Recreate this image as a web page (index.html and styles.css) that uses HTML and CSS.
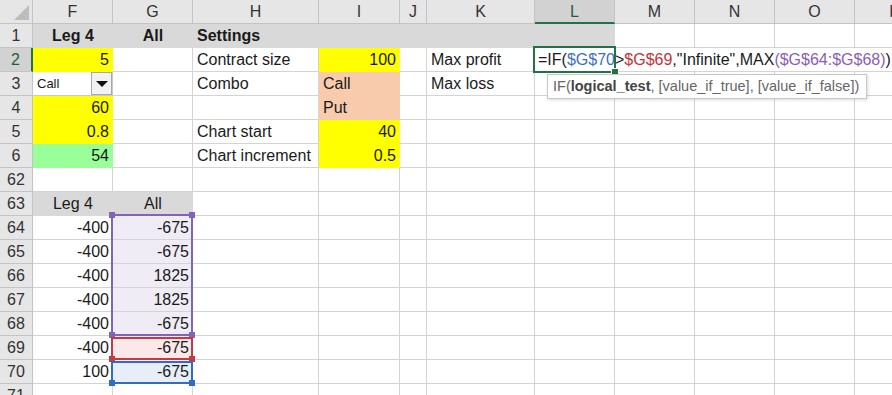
FILE: index.html
```html
<!DOCTYPE html>
<html lang="en">
<head>
    <meta charset="UTF-8">
    <meta name="viewport" content="width=device-width, initial-scale=1.0">
    <title>Options payoff - Leg 4</title>
    <link rel="stylesheet" href="styles.css">
</head>
<body>
    <div class="wrap">
        <div class="sheet">
            <!-- column headers -->
            <div class="hd corner"><span class="tri"></span></div>
            <div class="hd">F</div>
            <div class="hd">G</div>
            <div class="hd">H</div>
            <div class="hd">I</div>
            <div class="hd">J</div>
            <div class="hd">K</div>
            <div class="hd on">L</div>
            <div class="hd">M</div>
            <div class="hd">N</div>
            <div class="hd">O</div>
            <div class="hd">P</div>

            <!-- row 1 -->
            <div class="rh">1</div>
            <div class="c gray ctr b">Leg 4</div>
            <div class="c gray ctr b">All</div>
            <div class="c gray b">Settings</div>
            <div class="c gray"></div>
            <div class="c gray"></div>
            <div class="c gray"></div>
            <div class="c gray"></div>
            <div class="c"></div><div class="c"></div><div class="c"></div><div class="c"></div>

            <!-- row 2 -->
            <div class="rh on">2</div>
            <div class="c yel num">5</div>
            <div class="c"></div>
            <div class="c">Contract size</div>
            <div class="c yel num">100</div>
            <div class="c"></div>
            <div class="c">Max profit</div>
            <div class="c"></div>
            <div class="c"></div><div class="c"></div><div class="c"></div><div class="c"></div>

            <!-- row 3 -->
            <div class="rh">3</div>
            <div class="c dd"><span class="dd-val">Call</span><span class="dd-btn"><span class="arrow"></span></span></div>
            <div class="c"></div>
            <div class="c">Combo</div>
            <div class="c peach">Call</div>
            <div class="c"></div>
            <div class="c">Max loss</div>
            <div class="c"></div>
            <div class="c"></div><div class="c"></div><div class="c"></div><div class="c"></div>

            <!-- row 4 -->
            <div class="rh">4</div>
            <div class="c yel num">60</div>
            <div class="c"></div>
            <div class="c"></div>
            <div class="c peach">Put</div>
            <div class="c"></div>
            <div class="c"></div>
            <div class="c"></div>
            <div class="c"></div><div class="c"></div><div class="c"></div><div class="c"></div>

            <!-- row 5 -->
            <div class="rh">5</div>
            <div class="c yel num">0.8</div>
            <div class="c"></div>
            <div class="c">Chart start</div>
            <div class="c yel num">40</div>
            <div class="c"></div>
            <div class="c"></div>
            <div class="c"></div>
            <div class="c"></div><div class="c"></div><div class="c"></div><div class="c"></div>

            <!-- row 6 -->
            <div class="rh">6</div>
            <div class="c grn num">54</div>
            <div class="c"></div>
            <div class="c">Chart increment</div>
            <div class="c yel num">0.5</div>
            <div class="c"></div>
            <div class="c"></div>
            <div class="c"></div>
            <div class="c"></div><div class="c"></div><div class="c"></div><div class="c"></div>

            <!-- row 62 -->
            <div class="rh">62</div>
            <div class="c"></div><div class="c"></div><div class="c"></div><div class="c"></div>
            <div class="c"></div><div class="c"></div><div class="c"></div>
            <div class="c"></div><div class="c"></div><div class="c"></div><div class="c"></div>

            <!-- row 63 -->
            <div class="rh">63</div>
            <div class="c gray ctr">Leg 4</div>
            <div class="c gray ctr">All</div>
            <div class="c"></div><div class="c"></div><div class="c"></div><div class="c"></div>
            <div class="c"></div><div class="c"></div><div class="c"></div><div class="c"></div><div class="c"></div>

            <!-- rows 64 - 70 -->
            <div class="rh">64</div>
            <div class="c num">-400</div>
            <div class="c num hl-purple">-675</div>
            <div class="c"></div><div class="c"></div><div class="c"></div><div class="c"></div>
            <div class="c"></div><div class="c"></div><div class="c"></div><div class="c"></div><div class="c"></div>

            <div class="rh">65</div>
            <div class="c num">-400</div>
            <div class="c num hl-purple">-675</div>
            <div class="c"></div><div class="c"></div><div class="c"></div><div class="c"></div>
            <div class="c"></div><div class="c"></div><div class="c"></div><div class="c"></div><div class="c"></div>

            <div class="rh">66</div>
            <div class="c num">-400</div>
            <div class="c num hl-purple">1825</div>
            <div class="c"></div><div class="c"></div><div class="c"></div><div class="c"></div>
            <div class="c"></div><div class="c"></div><div class="c"></div><div class="c"></div><div class="c"></div>

            <div class="rh">67</div>
            <div class="c num">-400</div>
            <div class="c num hl-purple">1825</div>
            <div class="c"></div><div class="c"></div><div class="c"></div><div class="c"></div>
            <div class="c"></div><div class="c"></div><div class="c"></div><div class="c"></div><div class="c"></div>

            <div class="rh">68</div>
            <div class="c num">-400</div>
            <div class="c num hl-purple">-675</div>
            <div class="c"></div><div class="c"></div><div class="c"></div><div class="c"></div>
            <div class="c"></div><div class="c"></div><div class="c"></div><div class="c"></div><div class="c"></div>

            <div class="rh">69</div>
            <div class="c num">-400</div>
            <div class="c num hl-red">-675</div>
            <div class="c"></div><div class="c"></div><div class="c"></div><div class="c"></div>
            <div class="c"></div><div class="c"></div><div class="c"></div><div class="c"></div><div class="c"></div>

            <div class="rh">70</div>
            <div class="c num">100</div>
            <div class="c num hl-blue">-675</div>
            <div class="c"></div><div class="c"></div><div class="c"></div><div class="c"></div>
            <div class="c"></div><div class="c"></div><div class="c"></div><div class="c"></div><div class="c"></div>

            <!-- row 71 -->
            <div class="rh">71</div>
            <div class="c"></div><div class="c"></div><div class="c"></div><div class="c"></div>
            <div class="c"></div><div class="c"></div><div class="c"></div>
            <div class="c"></div><div class="c"></div><div class="c"></div><div class="c"></div>
        </div>

        <!-- cell L2 in edit mode -->
        <div class="edit-text">=IF(<span class="ref-blue">$G$70</span>&gt;<span class="ref-red">$G$69</span>,"Infinite",MAX<span class="ref-purple">($G$64:$G$68)</span>)</div>
        <div class="edit-frame"><span class="fill-handle"></span></div>
        <div class="tip">IF(<b>logical_test</b>, [value_if_true], [value_if_false])</div>

        <!-- range references -->
        <div class="range purple"><i class="h tl"></i><i class="h tr"></i><i class="h bl"></i><i class="h br"></i></div>
        <div class="range red"><i class="h bl"></i><i class="h br"></i></div>
        <div class="range blue"><i class="h bl"></i><i class="h br"></i></div>
    </div>
</body>
</html>
```

FILE: styles.css
```css
body {
    margin: 0;
    background: #fff;
    font-family: 'Liberation Sans', Arial, sans-serif;
    overflow: hidden;
}
.wrap {
    position: relative;
    width: 892px;
    height: 395px;
    overflow: hidden;
}
.sheet {
    display: grid;
    grid-template-columns: 33px 80px 80px 126px 81px 27px 108px 80px 80px 80px 80px 80px;
    grid-auto-rows: 24px;
    font-size: 16px;
    color: #1a1a1a;
}
.c, .hd, .rh {
    box-sizing: border-box;
    border-right: 1px solid #d4d4d4;
    border-bottom: 1px solid #d4d4d4;
    line-height: 23px;
    padding: 0 3px 0 4px;
    white-space: nowrap;
    overflow: hidden;
}

/* headers */
.hd {
    background: #e6e6e6;
    border-color: #c4c4c4;
    color: #333;
    text-align: center;
    padding: 0;
}
.hd.on {
    background: #d2d2d2;
    color: #225e3c;
    border-bottom: 2px solid #217346;
}
.corner {
    display: flex;
    align-items: flex-end;
    justify-content: flex-end;
    padding: 0 3px 3px 0;
}
.tri {
    width: 0;
    height: 0;
    border-left: 15px solid transparent;
    border-bottom: 15px solid #bdbdbd;
}
.rh {
    background: #e6e6e6;
    border-color: #c4c4c4;
    color: #333;
    text-align: center;
    padding: 0;
}
.rh.on {
    background: #d2d2d2;
    color: #225e3c;
    border-right: 2px solid #217346;
}

/* cells */
.num { text-align: right; }
.ctr { text-align: center; }
.b { font-weight: bold; }
.gray { background: #d9d9d9; border-color: #d9d9d9; }
.yel { background: #ffff00; border-color: #ffff00; }
.peach { background: #f8cbad; border-color: #f8cbad; }
.grn { background: #99ff99; border-color: #99ff99; }
.hl-purple { background: #efecf6; }
.hl-red { background: #fbe9e9; }
.hl-blue { background: #e8eef8; }

/* data validation dropdown */
.dd {
    display: flex;
    justify-content: space-between;
    padding-right: 0;
    border-color: #c8c8c8;
}
.dd-val {
    font-size: 13px;
}
.dd-btn {
    box-sizing: border-box;
    width: 21px;
    height: 23px;
    background: #f2f2f2;
    border: 1px solid #a9a9a9;
    display: flex;
    align-items: center;
    justify-content: center;
}
.arrow {
    width: 0;
    height: 0;
    border-left: 6px solid transparent;
    border-right: 6px solid transparent;
    border-top: 6px solid #111;
}

/* editing L2 */
.edit-text {
    position: absolute;
    left: 535px;
    top: 48px;
    right: 0;
    height: 23px;
    line-height: 23px;
    padding-left: 3px;
    background: #fff;
    font-size: 16px;
    color: #1a1a1a;
    white-space: nowrap;
}
.ref-blue { color: #3a6fc6; }
.ref-red { color: #c7303a; }
.ref-purple { color: #8c5db8; }
.edit-frame {
    position: absolute;
    left: 533px;
    top: 46px;
    width: 83px;
    height: 27px;
    box-sizing: border-box;
    border: 2px solid #217346;
}
.fill-handle {
    position: absolute;
    right: -5px;
    bottom: -5px;
    width: 6px;
    height: 6px;
    background: #217346;
    border: 1px solid #fff;
}
.tip {
    position: absolute;
    left: 547px;
    top: 74px;
    width: 320px;
    height: 25px;
    box-sizing: border-box;
    border: 1px solid #c8c8c8;
    background: #fff;
    box-shadow: 1px 1px 3px rgba(0, 0, 0, 0.15);
    font-size: 14.5px;
    line-height: 23px;
    padding-left: 5px;
    color: #666;
    white-space: nowrap;
}
.tip b { color: #444; }

/* range reference boxes */
.range {
    position: absolute;
    left: 111px;
    width: 82px;
    box-sizing: border-box;
    border: 2px solid;
}
.range.purple { top: 214px; height: 122px; border-color: #8064b9; color: #8064b9; }
.range.red { top: 337px; height: 23px; border-color: #c43a42; color: #c43a42; }
.range.blue { top: 361px; height: 23px; border-color: #2f6dc5; color: #2f6dc5; }
.h {
    position: absolute;
    width: 6px;
    height: 6px;
    background: currentColor;
}
.h.tl { left: -4px; top: -4px; }
.h.tr { right: -4px; top: -4px; }
.h.bl { left: -4px; bottom: -4px; }
.h.br { right: -4px; bottom: -4px; }
```
